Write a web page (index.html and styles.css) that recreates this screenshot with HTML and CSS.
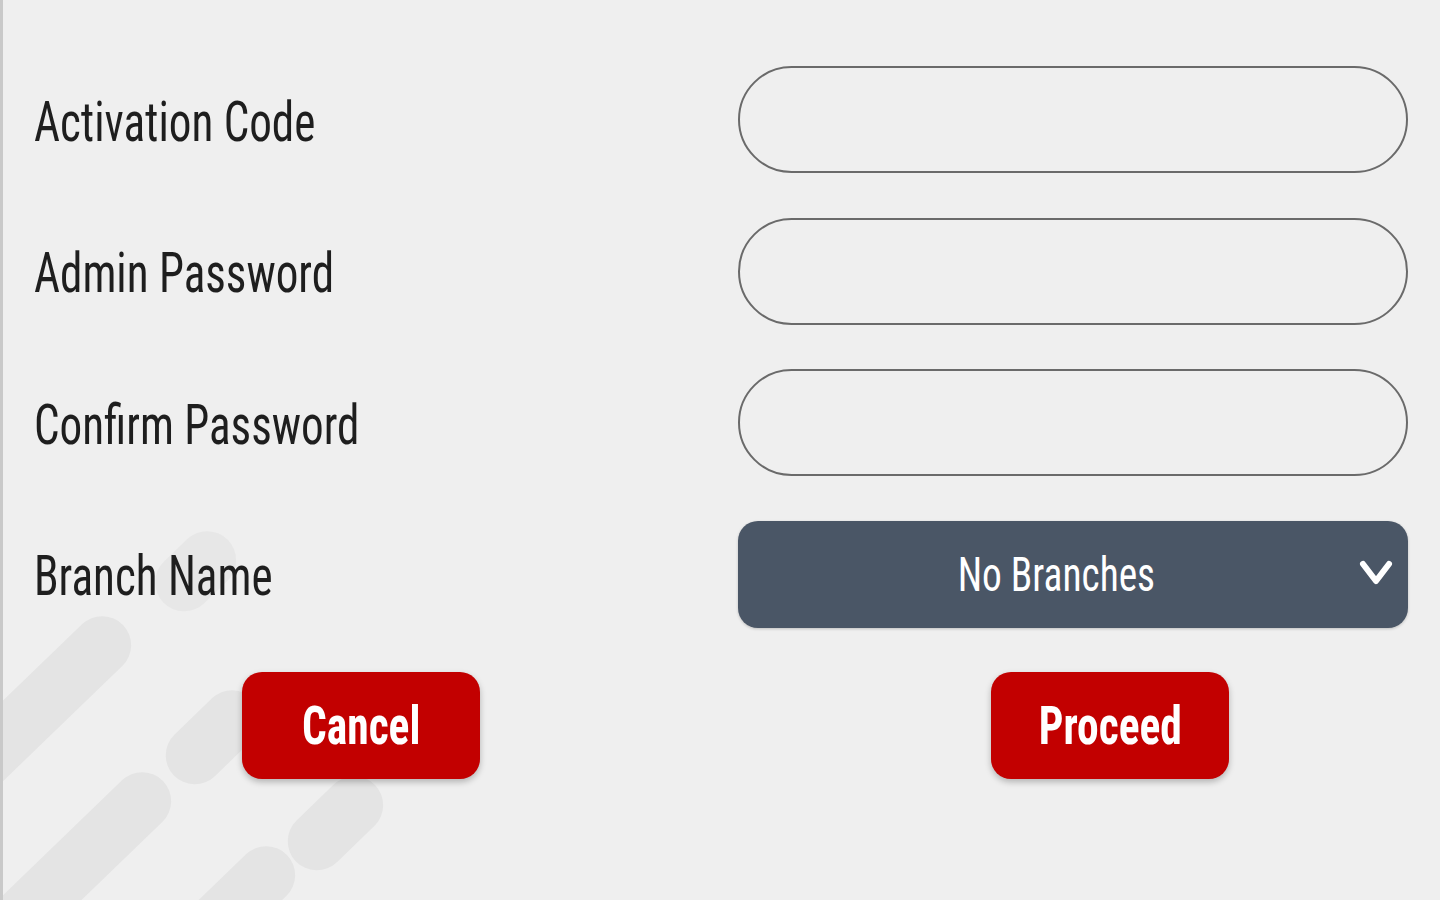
FILE: index.html
```html
<!DOCTYPE html>
<html lang="en">
<head>
  <meta charset="UTF-8">
  <meta name="viewport" content="width=device-width, initial-scale=1.0">
  <link rel="stylesheet" href="styles.css">
</head>
<body>

<div class="stripes">
  <div class="stripe s1"></div>
  <div class="stripe s2"></div>
  <div class="stripe s3"></div>
  <div class="stripe s4"></div>
  <div class="stripe s5"></div>
  <div class="stripe s6"></div>
</div>

<form class="setup">
  <div class="row">
    <label class="label">Activation Code</label>
    <input class="field" type="text">
  </div>
  <div class="row">
    <label class="label">Admin Password</label>
    <input class="field" type="password">
  </div>
  <div class="row">
    <label class="label">Confirm Password</label>
    <input class="field" type="password">
  </div>
  <div class="row">
    <label class="label">Branch Name</label>
    <div class="select">
      <span class="narrow">No Branches</span>
      <svg class="chevron" width="34" height="28" viewBox="0 0 34 28">
        <polyline points="4,5 17,22 30,5" fill="none" stroke="#fff" stroke-width="6" stroke-linecap="round" stroke-linejoin="round"/>
      </svg>
    </div>
  </div>

  <div class="actions">
    <button type="button" class="btn"><span class="narrow">Cancel</span></button>
    <button type="button" class="btn"><span class="narrow">Proceed</span></button>
  </div>
</form>

</body>
</html>
```

FILE: styles.css
```css
html, body {
  overflow: hidden;
}

body {
  margin: 0;
  height: 100vh;
  background-color: #efefef;
  border-left: 3px solid #c9c9c9;
  box-sizing: border-box;
  font-family: "Roboto Condensed", "Liberation Sans Narrow", Roboto, sans-serif;
  position: relative;
}

/* background decoration */
.stripes {
  position: absolute;
  inset: 0;
  overflow: hidden;
  pointer-events: none;
}

.stripe {
  position: absolute;
  height: 58px;
  border-radius: 29px;
  background-color: #e4e4e4;
  transform: rotate(-44deg);
  transform-origin: 100% 50%;
}

.s1 { width: 90px;  left: 135px;  top: 511px; opacity: 0.7; }
.s2 { width: 240px; left: -120px; top: 596px; }
.s3 { width: 110px; left: 140px;  top: 670px; }
.s4 { width: 110px; left: 262px;  top: 756px; }
.s5 { width: 260px; left: -100px; top: 752px; }
.s6 { width: 200px; left: 84px;   top: 826px; }

.setup {
  position: relative;
  padding: 66px 32px 0 31px;
}

.row {
  display: flex;
  align-items: center;
  justify-content: space-between;
  height: 107px;
  margin-bottom: 44.5px;
}

.label {
  font-size: 55px;
  color: #1e1e1e;
  display: inline-block;
  transform: scaleX(0.82);
  transform-origin: 0 50%;
  margin-top: 4px;
}

.narrow {
  display: inline-block;
  transform: scaleX(0.82);
}

.field {
  width: 670px;
  height: 107px;
  box-sizing: border-box;
  border: 2px solid #6a6a6a;
  border-radius: 54px;
  background: transparent;
  outline: none;
  padding: 0 40px;
  font: inherit;
}

.select {
  width: 670px;
  height: 107px;
  box-sizing: border-box;
  border-radius: 20px;
  background-color: #4a5666;
  color: #fff;
  font-size: 48px;
  display: flex;
  align-items: center;
  justify-content: center;
  padding-right: 34px;
  position: relative;
  box-shadow: 0 1px 3px rgba(0, 0, 0, 0.2);
}

.chevron {
  position: absolute;
  right: 15px;
  top: 38px;
}

.actions {
  display: flex;
  gap: 511px;
  padding-left: 208px;
}

.btn {
  width: 238px;
  height: 107px;
  border: none;
  border-radius: 20px;
  background-color: #c20000;
  color: #fff;
  font-family: inherit;
  font-weight: bold;
  font-size: 53px;
  box-shadow: 0 3px 6px rgba(0, 0, 0, 0.25);
}
```
